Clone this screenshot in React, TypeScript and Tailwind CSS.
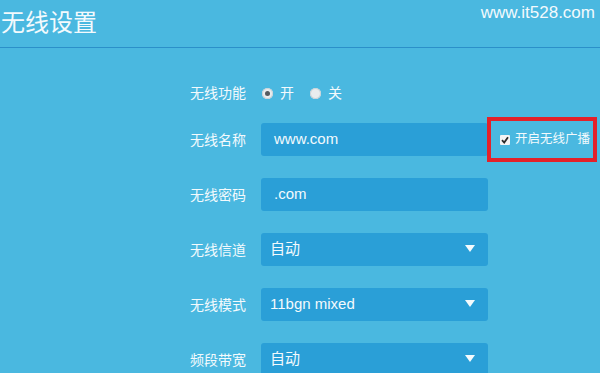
import React from "react";

const font = { fontFamily: '"Liberation Sans", "Noto Sans CJK SC", sans-serif' };

function Label({ children }: { children: React.ReactNode }) {
  return <div className="w-[56px] shrink-0 text-right text-[14px] leading-none text-[#f3fafd]">{children}</div>;
}

function Radio({ checked, label }: { checked?: boolean; label: string }) {
  return (
    <div className="flex items-center gap-[7px]">
      <span className="flex h-[11px] w-[11px] items-center justify-center rounded-full bg-[#e9ecee] shadow-[inset_0_0_0_1px_#c9d3d8]">
        {checked && <span className="h-[5px] w-[5px] rounded-full bg-[#555b60]" />}
      </span>
      <span className="text-[14px] leading-none text-[#f3fafd]">{label}</span>
    </div>
  );
}

function Field({ value }: { value: string }) {
  return (
    <div className="flex h-[33px] w-[227px] items-center rounded-[3px] bg-[#2a9fd7] pl-[13px] text-[15px] text-[#f3fafd]">
      {value}
    </div>
  );
}

function Select({ value }: { value: string }) {
  return (
    <div className="flex h-[33px] w-[227px] items-center justify-between rounded-[3px] bg-[#2a9fd7] pl-[9px] pr-[13px] text-[15px] text-[#f3fafd]">
      <span>{value}</span>
      <svg width="10" height="7" viewBox="0 0 10 7" className="mt-[-2px]">
        <path d="M0 0 H10 L5 7 Z" fill="#f3fafd" />
      </svg>
    </div>
  );
}

export default function App() {
  return (
    <div className="h-[373px] w-[600px] overflow-hidden bg-[#4ab8e0]" style={font}>
      <div className="flex h-[48px] items-start justify-between border-b border-[#2b90c9]">
        <h1 className="mt-[8px] pl-[1px] text-[24px] leading-[30px] text-[#f3fafd]">无线设置</h1>
        <div className="mt-[3px] pr-[5px] text-[17px] leading-[20px] text-[#f3fafd]">www.it528.com</div>
      </div>

      <div className="flex flex-col pl-[190px] pt-[35px]">
        <div className="flex h-[20px] items-center gap-[16px]">
          <Label>无线功能</Label>
          <div className="flex items-center gap-[16px]">
            <Radio checked label="开" />
            <Radio label="关" />
          </div>
        </div>

        <div className="mt-[20px] flex h-[33px] items-center gap-[15px]">
          <Label>无线名称</Label>
          <div className="flex items-center">
            <Field value="www.com" />
            <div className="ml-[-1px] flex h-[45px] w-[110px] shrink-0 items-center gap-[5px] border-4 border-[#e3212a] pl-[9px]">
              <span className="flex h-[10px] w-[10px] shrink-0 items-center justify-center rounded-[1px] bg-[#f4f4f4]">
                <svg width="8" height="8" viewBox="0 0 8 8">
                  <path d="M1 4.2 L3.2 6.5 L7 1.2" stroke="#2a2a2a" strokeWidth="1.8" fill="none" />
                </svg>
              </span>
              <span className="whitespace-nowrap text-[12.5px] leading-none text-[#f3fafd]">开启无线广播</span>
            </div>
          </div>
        </div>

        <div className="mt-[22px] flex h-[33px] items-center gap-[15px]">
          <Label>无线密码</Label>
          <Field value=".com" />
        </div>

        <div className="mt-[22px] flex h-[33px] items-center gap-[15px]">
          <Label>无线信道</Label>
          <Select value="自动" />
        </div>

        <div className="mt-[22px] flex h-[33px] items-center gap-[15px]">
          <Label>无线模式</Label>
          <Select value="11bgn mixed" />
        </div>

        <div className="mt-[22px] flex h-[33px] items-center gap-[15px]">
          <Label>频段带宽</Label>
          <Select value="自动" />
        </div>
      </div>
    </div>
  );
}
